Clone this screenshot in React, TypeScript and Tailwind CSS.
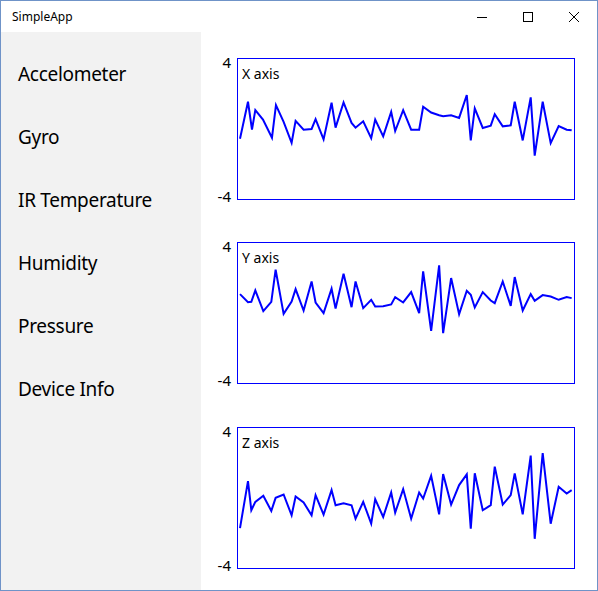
import React from "react";

type P = [number, number];

const xPts: P[] = [[121,295],[145,185],[157,268],[167,210],[190,238],[217,292],[229,195],[252,245],[276,307],[288,242],[312,268],[336,266],[348,237],[372,297],[396,188],[408,262],[432,187],[456,248],[468,262],[491,243],[515,293],[527,238],[551,288],[575,215],[587,272],[611,210],[635,268],[659,268],[671,200],[695,217],[719,225],[731,228],[755,225],[779,233],[802,165],[814,300],[826,205],[850,263],[874,256],[886,222],[910,258],[934,255],[946,185],[970,300],[994,172],[1006,345],[1030,185],[1054,308],[1078,257],[1102,268],[1117,270]];

const yPts: P[] = [[121,193],[145,217],[155,216],[167,182],[191,244],[215,216],[228,120],[252,252],[276,215],[288,178],[312,242],[336,155],[348,218],[372,250],[396,177],[408,236],[432,132],[456,232],[468,155],[491,235],[515,210],[527,230],[551,229],[575,224],[587,202],[611,218],[635,187],[659,250],[671,125],[695,303],[719,107],[731,310],[755,145],[779,253],[802,183],[814,195],[826,233],[850,187],[874,212],[886,220],[910,155],[934,228],[946,142],[970,242],[994,193],[1006,213],[1030,196],[1054,200],[1078,210],[1102,202],[1117,205]];

const zPts: P[] = [[121,338],[145,198],[155,285],[167,260],[191,242],[215,287],[228,248],[252,238],[276,300],[288,244],[312,262],[336,300],[348,240],[372,298],[396,225],[408,270],[432,264],[456,270],[468,310],[491,260],[515,325],[527,252],[551,305],[575,232],[587,292],[611,222],[635,310],[659,232],[671,250],[695,182],[719,297],[731,177],[755,268],[779,210],[802,178],[814,340],[826,175],[850,285],[874,270],[886,155],[910,268],[934,240],[946,175],[970,297],[994,122],[1006,370],[1030,115],[1054,325],[1078,215],[1102,235],[1117,225]];

const font = { fontFamily: '"Noto Sans", "Open Sans", sans-serif' };

function Chart({ label, pts, vb }: { label: string; pts: P[]; vb: string }) {
  return (
    <div className="flex">
      <div className="w-[36px] pr-[6px] flex flex-col justify-between items-end text-[15px] leading-[15px] text-black">
        <div className="-mt-[3px]">4</div>
        <div className="-mb-[4px]">-4</div>
      </div>
      <div className="relative w-[338px] h-[142px] border border-[#0000ff] bg-white">
        <svg
          className="absolute inset-0 w-full h-full"
          viewBox={vb}
          preserveAspectRatio="none"
        >
          <polyline
            points={pts.map((p) => p.join(",")).join(" ")}
            fill="none"
            stroke="#0000ff"
            strokeWidth={2}
            vectorEffect="non-scaling-stroke"
            strokeLinejoin="miter"
          />
        </svg>
        <div className="relative pl-[4px] pt-[8px] text-[14px] leading-[14px] text-black">{label}</div>
      </div>
    </div>
  );
}

export default function App() {
  const items = ["Accelometer", "Gyro", "IR Temperature", "Humidity", "Pressure", "Device Info"];
  return (
    <div style={font} className="w-[598px] h-[591px] border border-[#6f93c8] bg-white flex flex-col overflow-hidden">
      <div className="h-[31px] flex items-center shrink-0">
        <div className="pl-[11px] text-[12px] text-black flex-1">SimpleApp</div>
        <div className="flex h-full">
          <div className="w-[46px] h-full flex items-center justify-center">
            <svg width="10" height="10" viewBox="0 0 10 10"><line x1="0" y1="5.5" x2="10" y2="5.5" stroke="#000" strokeWidth="1" /></svg>
          </div>
          <div className="w-[46px] h-full flex items-center justify-center">
            <svg width="10" height="10" viewBox="0 0 10 10"><rect x="0.5" y="0.5" width="9" height="9" fill="none" stroke="#000" strokeWidth="1" /></svg>
          </div>
          <div className="w-[46px] h-full flex items-center justify-center">
            <svg width="10" height="10" viewBox="0 0 10 10"><path d="M0 0 L10 10 M10 0 L0 10" stroke="#000" strokeWidth="1" /></svg>
          </div>
        </div>
      </div>
      <div className="flex flex-1">
        <div className="w-[200px] bg-[#f2f2f2] pt-[11px]">
          {items.map((t) => (
            <div key={t} className="h-[63px] flex items-center pl-[17px] text-[19px] tracking-[-0.3px] text-black">
              {t}
            </div>
          ))}
        </div>
        <div className="flex-1 flex flex-col pt-[26px]">
          <Chart label="X axis" pts={xPts} vb="115 58 1009 416" />
          <div className="h-[42px]" />
          <Chart label="Y axis" pts={yPts} vb="115 40 1009 419" />
          <div className="h-[43px]" />
          <Chart label="Z axis" pts={zPts} vb="115 40 1009 417" />
        </div>
      </div>
    </div>
  );
}
